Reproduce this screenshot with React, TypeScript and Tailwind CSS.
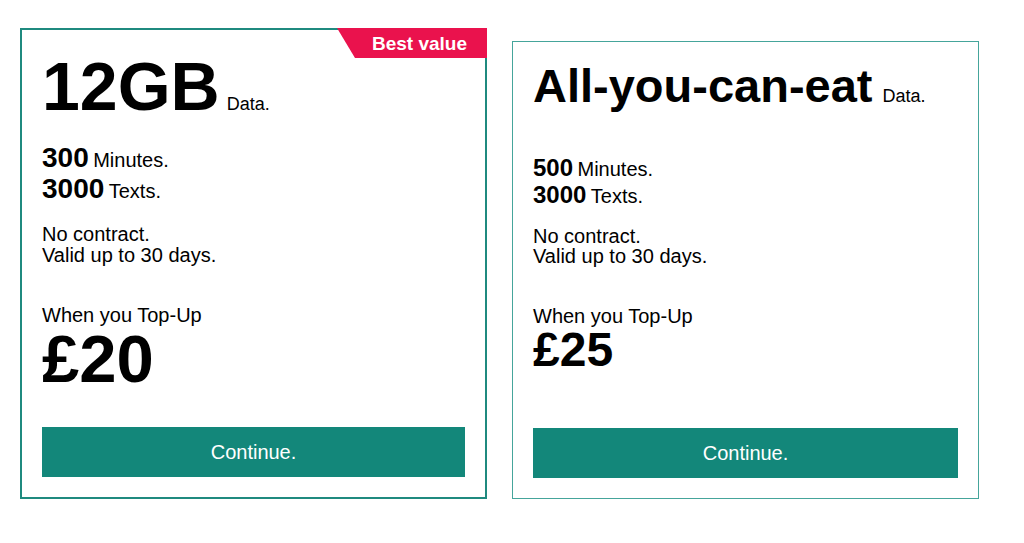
import React from "react";

export default function App() {
  return (
    <div
      className="w-[1024px] h-[543px] bg-white text-black"
      style={{ fontFamily: '"Liberation Sans", Arial, Helvetica, sans-serif' }}
    >
      <div className="flex items-end gap-[25px] pl-[20px] pt-[28px]">
        {/* Card 1 */}
        <div className="relative w-[467px] border-2 border-[#1f8a7f] px-[20px] pt-[22px] pb-[20px] flex flex-col">
          <div className="absolute -top-[2px] -right-[2px] w-[150px] h-[30px] bg-[#ea124d] flex items-center justify-end pr-[20px] [clip-path:polygon(0_0,100%_0,100%_100%,18px_100%)]">
            <span className="text-white font-bold text-[19px] leading-none">Best value</span>
          </div>
          <div className="flex items-baseline">
            <span className="font-bold text-[68px] leading-none">12GB</span>
            <span className="text-[18px] ml-[7px]">Data.</span>
          </div>
          <div className="mt-[24px] leading-[27px]">
            <div>
              <span className="font-bold text-[28px]">300</span>{" "}
              <span className="text-[20px]">Minutes.</span>
            </div>
            <div>
              <span className="font-bold text-[28px]">3000</span>{" "}
              <span className="text-[20px]">Texts.</span>
            </div>
          </div>
          <div className="mt-[18px] text-[20px] leading-[21px]">
            <div>No contract.</div>
            <div>Valid up to 30 days.</div>
          </div>
          <div className="mt-[39px] text-[20px] leading-[20px]">When you Top-Up</div>
          <div className="font-bold text-[67px] leading-none">£20</div>
          <button className="mt-[35px] h-[50px] w-full bg-[#13877a] text-white text-[20px]">
            Continue.
          </button>
        </div>

        {/* Card 2 */}
        <div className="w-[467px] border border-[#45a59b] px-[20px] pt-[20px] pb-[20px] flex flex-col">
          <div className="flex items-baseline">
            <span className="font-bold text-[47px] leading-none">All-you-can-eat</span>
            <span className="text-[18px] ml-[10px]">Data.</span>
          </div>
          <div className="mt-[46px] leading-[24px]">
            <div>
              <span className="font-bold text-[24px]">500</span>{" "}
              <span className="text-[20px]">Minutes.</span>
            </div>
            <div>
              <span className="font-bold text-[24px]">3000</span>{" "}
              <span className="text-[20px]">Texts.</span>
            </div>
          </div>
          <div className="mt-[16px] text-[20px] leading-[20px]">
            <div>No contract.</div>
            <div>Valid up to 30 days.</div>
          </div>
          <div className="mt-[40px] text-[20px] leading-[20px]">When you Top-Up</div>
          <div className="font-bold text-[48px] leading-none">£25</div>
          <button className="mt-[54px] h-[50px] w-full bg-[#13877a] text-white text-[20px]">
            Continue.
          </button>
        </div>
      </div>
    </div>
  );
}
